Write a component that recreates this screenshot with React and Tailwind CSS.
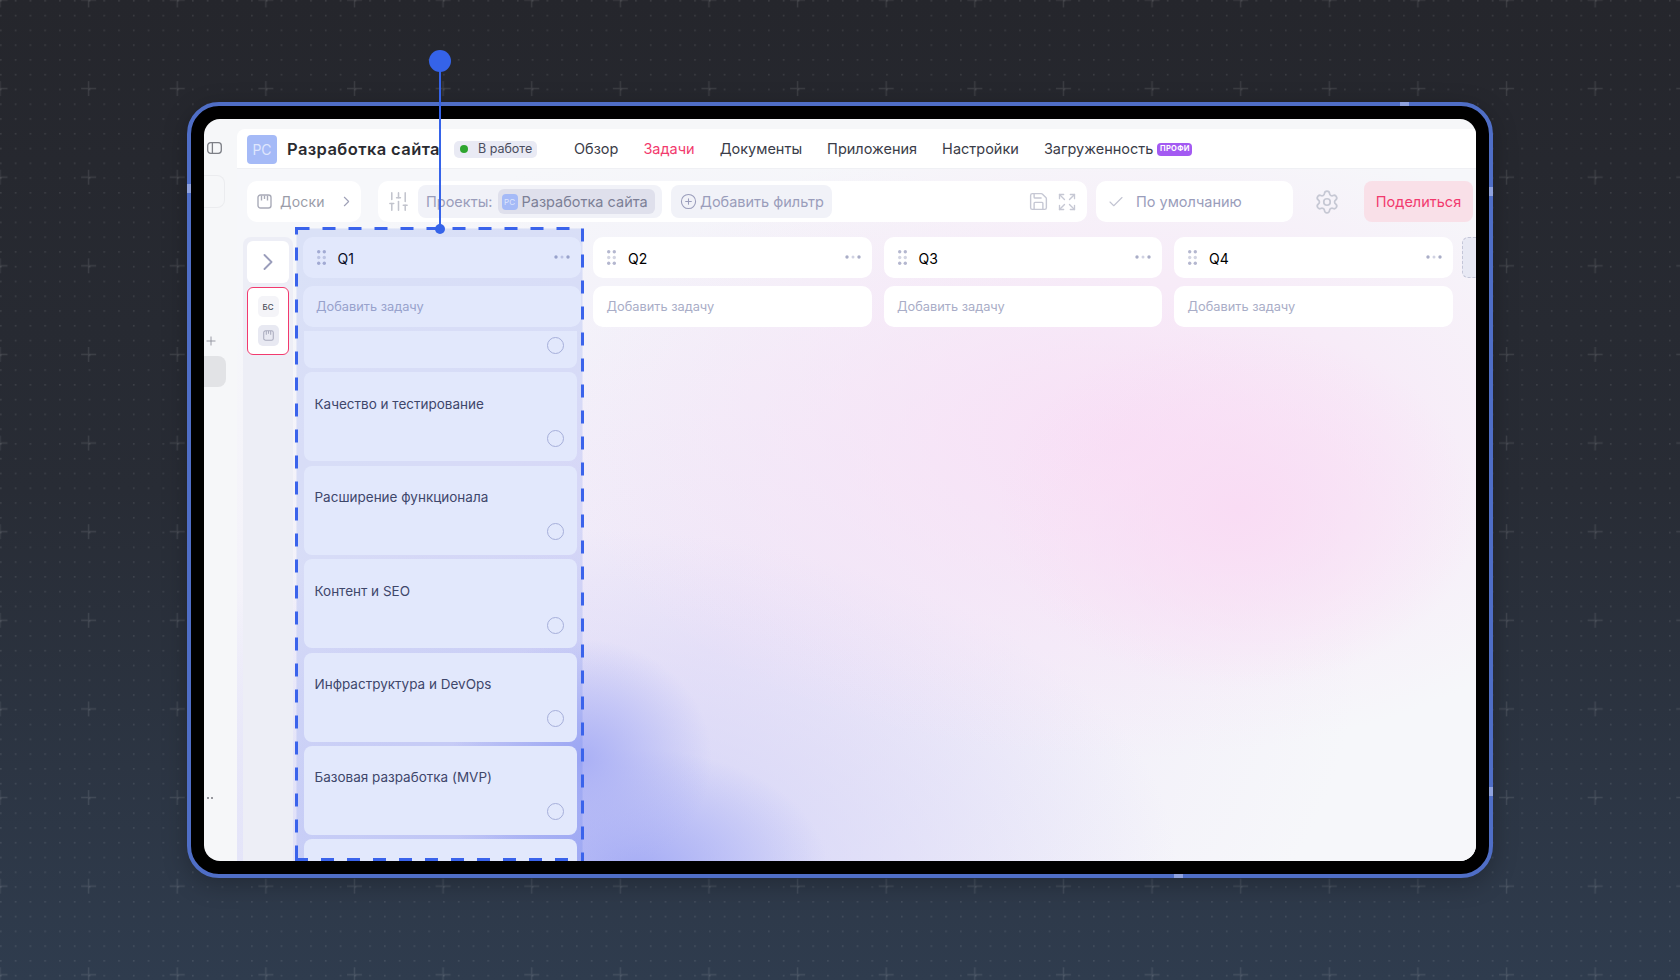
import React from 'react';
import { Check, ChevronRight, CirclePlus, Expand, Plus, Save, Settings, SlidersVertical } from 'lucide-react';

const tasks = ['Качество и тестирование', 'Расширение функционала', 'Контент и SEO', 'Инфраструктура и DevOps', 'Базовая разработка (MVP)', ''];
const nav = ['Обзор', 'Задачи', 'Документы', 'Приложения', 'Настройки'];
const columns = ['Q1', 'Q2', 'Q3', 'Q4'];

const Grip = () => (
  <svg width="9" height="15" viewBox="0 0 9 15" className="shrink-0">
    <g fill="#b4b7cf">
      <circle cx="1.7" cy="1.7" r="1.7" />
      <circle cx="7.3" cy="1.7" r="1.7" />
      <circle cx="1.7" cy="7.5" r="1.7" fillOpacity="0.6" />
      <circle cx="7.3" cy="7.5" r="1.7" fillOpacity="0.6" />
      <circle cx="1.7" cy="13.3" r="1.7" />
      <circle cx="7.3" cy="13.3" r="1.7" />
    </g>
  </svg>
);

const Dots = () => (
  <svg width="16" height="4" viewBox="0 0 16 4">
    <circle cx="2" cy="2" r="1.7" fill="#a9adc7" />
    <circle cx="8" cy="2" r="1.5" fill="#d0d2e2" />
    <circle cx="14" cy="2" r="1.7" fill="#a9adc7" />
  </svg>
);

const BoardIcon = ({ size = 15, color = '#a9abb8' }) => (
  <svg width={size} height={size} viewBox="0 0 15 15" fill="none" stroke={color} strokeWidth="1.4">
    <rect x="1" y="1" width="13" height="13" rx="2.5" />
    <path d="M4.5 1.5v5M7.5 1.5v3.5M10.5 1.5v5" />
  </svg>
);

const PanelIcon = () => (
  <svg width="15" height="12" viewBox="0 0 15 12" fill="none" stroke="#7d7f86" strokeWidth="1.3">
    <rect x="0.7" y="0.7" width="13.6" height="10.6" rx="3" />
    <path d="M5.4 0.7v10.6" />
  </svg>
);

const Column = ({ title, first }) => (
  <div className="w-[278.5px] shrink-0 flex flex-col">
    <div className="h-[41px] shrink-0 bg-white rounded-[10px] flex items-center pl-[14px] pr-[11px]">
      <Grip />
      <span className="ml-[12px] pt-[1px] text-[14px] text-black flex-1">{title}</span>
      <div className="-mt-[2px]"><Dots /></div>
    </div>
    <div className="mt-[8px] h-[41px] shrink-0 bg-white rounded-[10px] flex items-center pl-[13.5px] text-[12.8px] text-[#a9adc7]">
      Добавить задачу
    </div>
    {first && (
      <div className="mt-[4px] pl-[1px] pr-[4px] flex flex-col gap-[4.4px]">
        <div className="h-[37px] shrink-0 bg-white rounded-b-[8px] flex justify-end pt-[5.5px] pr-[13px]">
          <span className="w-[17px] h-[17px] rounded-full border-[1.5px] border-[#b9bcd8]" />
        </div>
        {tasks.map((t, i) => (
          <div key={i} className="h-[89px] shrink-0 bg-white rounded-[8px] pt-[21.5px] pl-[11px] pr-[13px] pb-[14.5px] flex flex-col justify-between">
            <span className="text-[13.5px] leading-[20px] text-[#3f4254]">{t}</span>
            <span className="w-[17px] h-[17px] self-end rounded-full border-[1.5px] border-[#b9bcd8]" />
          </div>
        ))}
      </div>
    )}
  </div>
);

export default function App() {
  return (
    <div className="relative h-[980px] overflow-hidden bg-gradient-to-b from-[#25262c] via-[#282c35] to-[#2f3c4e] font-['Inter','Noto_Sans',sans-serif] pt-[102px] pl-[187px]">
      {/* точки и крестики на фоне */}
      <svg className="absolute inset-0" width="1680" height="980">
        <defs>
          <pattern id="dots" width="14.77" height="14.77" patternUnits="userSpaceOnUse">
            <rect x="0" y="0" width="1.6" height="1.6" fill="#fff" fillOpacity="0.1" />
          </pattern>
          <pattern id="crosses" width="88.62" height="88.62" patternUnits="userSpaceOnUse" x="-7.5" y="-7.5">
            <path d="M7.5 0v15M0 7.5h15" stroke="#fff" strokeOpacity="0.1" strokeWidth="1.4" fill="none" />
          </pattern>
        </defs>
        <rect width="1680" height="980" fill="url(#dots)" />
        <rect width="1680" height="980" fill="url(#crosses)" />
      </svg>

      {/* планшет */}
      <div className="relative w-[1306px] h-[776px] rounded-[32px] border-4 border-[#4f6ec6] bg-black p-[13px] shadow-[0_6px_24px_rgba(0,0,0,0.25)]">
        <div className="flex h-full rounded-[16px] overflow-hidden bg-[#f6f7f9]">
          <aside className="w-[33px] shrink-0 flex flex-col relative">
            <div className="mt-[23px] ml-[3px]"><PanelIcon /></div>
            <div className="mt-[21px] w-[21px] h-[33px] rounded-r-[8px] border border-l-0 border-[#ebecef]" />
            <Plus className="mt-[126px] ml-0 text-[#8d8f98]" size={14} strokeWidth={1.5} />
            <div className="mt-[8px] w-[22px] h-[31px] rounded-r-[8px] bg-[#e2e3e6]" />
            <div className="mt-[410px] ml-[3px] flex gap-[2px]">
              <span className="w-[2px] h-[2px] bg-[#77797f] rounded-full" />
              <span className="w-[2px] h-[2px] bg-[#77797f] rounded-full" />
            </div>
          </aside>

          <main className="flex-1 min-w-0 flex flex-col pt-[10px]">
            <header className="h-[40px] shrink-0 bg-white rounded-tl-[8px] border-b border-[#eff0f4] flex items-center pl-[10px] pt-[1px]">
              <div className="w-[30px] h-[29px] rounded-[4px] bg-[#a5baf7] flex items-center justify-center text-[14px] text-[#dfe6fd]">РС</div>
              <h1 className="ml-[10px] text-[16.5px] font-semibold text-[#2a2b31] tracking-[0.4px] whitespace-nowrap">Разработка сайта</h1>
              <div className="ml-[14px] w-[83px] h-[17px] rounded-[5px] bg-[#e9eaf4] flex items-center pl-[6px] text-[12.5px] text-[#4a4d5e]">
                <span className="w-[8px] h-[8px] rounded-full bg-[#2ea52f]" />
                <span className="ml-[10px]">В работе</span>
              </div>
              <nav className="ml-[37px] flex items-center gap-[25px] text-[14.5px] text-[#3a3c48] whitespace-nowrap">
                {nav.map((n) => (
                  <span key={n} className={n === 'Задачи' ? 'text-[#f23a6e]' : ''}>{n}</span>
                ))}
                <span className="flex items-center gap-[4px]">
                  Загруженность
                  <span className="w-[35px] h-[13px] rounded-[4px] bg-[#a35af2] text-white text-[7.5px] font-bold tracking-[0.3px] flex items-center justify-center">ПРОФИ</span>
                </span>
              </nav>
            </header>

            <div className="flex-1 min-h-0 flex flex-col bg-[#f6f7fa] bg-[radial-gradient(ellipse_240px_180px_at_1000px_340px,#f9dcf4_0%,#f9dcf400_100%),radial-gradient(ellipse_560px_320px_at_880px_270px,#f8e0f6_0%,#f8e0f600_100%),radial-gradient(ellipse_130px_120px_at_345px_590px,#aab0f5_0%,#aab0f500_100%),radial-gradient(ellipse_190px_120px_at_400px_700px,#a6adf5_0%,#a6adf500_100%),radial-gradient(ellipse_600px_340px_at_340px_700px,#d0d1f7_0%,#d0d1f700_100%),radial-gradient(ellipse_640px_500px_at_480px_480px,#eee6f8_0%,#eee6f800_100%)]">
              <div className="mt-[12px] h-[41px] shrink-0 flex pl-[10px] pr-[3px]">
                <div className="w-[114px] bg-white rounded-[10px] flex items-center pl-[10px] text-[14px] tracking-[0.2px] text-[#9a9ca8]">
                  <BoardIcon />
                  <span className="ml-[8px]">Доски</span>
                  <ChevronRight className="ml-[13px] text-[#a0a2b8]" size={17} strokeWidth={1.6} />
                </div>
                <div className="ml-[17px] w-[709px] bg-white rounded-[10px] flex items-center pl-[9px] text-[14.5px] text-[#9a9dbb]">
                  <SlidersVertical className="text-[#c2c4cd]" size={23} strokeWidth={1.6} />
                  <div className="ml-[8px] w-[244px] h-[33px] rounded-[8px] bg-[#f1f2f8] flex items-center pl-[8px]">
                    Проекты:
                    <div className="ml-[5px] w-[157px] h-[25px] rounded-[6px] bg-[#dfe0ec] flex items-center pl-[4px] text-[#7c7f96] whitespace-nowrap">
                      <span className="w-[16px] h-[16px] rounded-[4px] bg-[#a5baf7] text-[#dfe6fd] text-[8px] flex items-center justify-center">РС</span>
                      <span className="ml-[4px]">Разработка сайта</span>
                    </div>
                  </div>
                  <div className="ml-[9px] w-[161px] h-[33px] rounded-[8px] bg-[#f1f2f8] flex items-center pl-[9px]">
                    <CirclePlus size={17} strokeWidth={1.5} />
                    <span className="ml-[3px] whitespace-nowrap">Добавить фильтр</span>
                  </div>
                  <Save className="ml-[196px] text-[#c6c8d4]" size={21} strokeWidth={1.6} />
                  <Expand className="ml-[8px] text-[#c6c8d4]" size={20} strokeWidth={1.6} />
                </div>
                <div className="ml-[9px] w-[197px] bg-white rounded-[10px] flex items-center pl-[11px] text-[14.5px] text-[#9a9dbb]">
                  <Check className="text-[#c2c4d2]" size={18} strokeWidth={1.5} />
                  <span className="ml-[11px]">По умолчанию</span>
                </div>
                <Settings className="ml-[21px] self-center text-[#c6c8d4]" size={26} strokeWidth={1.6} />
                <div className="ml-[24px] w-[109px] bg-[#f9e0e8] rounded-[8px] flex items-center justify-center text-[14.5px] text-[#f23a6e]">
                  Поделиться
                </div>
              </div>

              <div className="flex-1 min-h-0 mt-[15px] flex">
                <div className="ml-[6px] w-[50px] shrink-0 bg-[#edeef6] rounded-t-[8px] p-[4px] flex flex-col gap-[4px]">
                  <div className="h-[42px] w-[42px] bg-white rounded-[6px] flex items-center justify-center">
                    <ChevronRight className="text-[#9a9dbb]" size={28} strokeWidth={1.6} />
                  </div>
                  <div className="h-[68px] w-[42px] bg-white rounded-[6px] border border-[#f23a6e] flex flex-col items-center pt-[8px] gap-[8px]">
                    <div className="w-[21px] h-[21px] rounded-[5px] bg-[#f4f4f8] flex items-center justify-center text-[8px] font-medium text-[#4b4d5a]">БС</div>
                    <div className="w-[21px] h-[21px] rounded-[5px] bg-[#e8e9f2] flex items-center justify-center">
                      <BoardIcon size={11} color="#a9abbd" />
                    </div>
                  </div>
                </div>
                <div className="ml-[9.5px] flex gap-[12px] overflow-hidden">
                  {columns.map((c, i) => <Column key={c} title={c} first={i === 0} />)}
                </div>
                <div className="ml-[9px] flex-1 h-[41px] bg-[#e8e9f4] rounded-l-[6px] border border-r-0 border-dashed border-[#c4c6d8]" />
              </div>
            </div>
          </main>
        </div>

        {/* блики на рамке */}
        <span className="absolute -left-[4px] top-[78px] w-[4px] h-[9px] bg-[#8fa2de]" />
        <span className="absolute -right-[4px] top-[81px] w-[4px] h-[9px] bg-[#8fa2de]" />
        <span className="absolute -right-[4px] top-[681px] w-[4px] h-[9px] bg-[#8fa2de]" />
        <span className="absolute -top-[4px] left-[1209px] w-[9px] h-[4px] bg-[#8fa2de]" />
        <span className="absolute -bottom-[4px] left-[983px] w-[9px] h-[4px] bg-[#8fa2de]" />
      </div>

      {/* выделение колонки */}
      <svg className="absolute left-[295px] top-[227px]" width="289" height="634" viewBox="0 0 289 634">
        <rect x="1.5" y="1.5" width="286" height="640" fill="#3a63eb" fillOpacity="0.15" stroke="#3a63eb" strokeWidth="3" strokeDasharray="13 13" />
        <path d="M0 632.5h289" stroke="#3a63eb" strokeWidth="3" strokeDasharray="13 13" />
      </svg>
      <div className="absolute left-[438.5px] top-[61px] w-[2px] h-[167px] bg-[#3563e9]" />
      <div className="absolute left-[429px] top-[50px] w-[22px] h-[22px] rounded-full bg-[#3563e9]" />
      <div className="absolute left-[435px] top-[223.5px] w-[10px] h-[10px] rounded-full bg-[#3563e9]" />
    </div>
  );
}
